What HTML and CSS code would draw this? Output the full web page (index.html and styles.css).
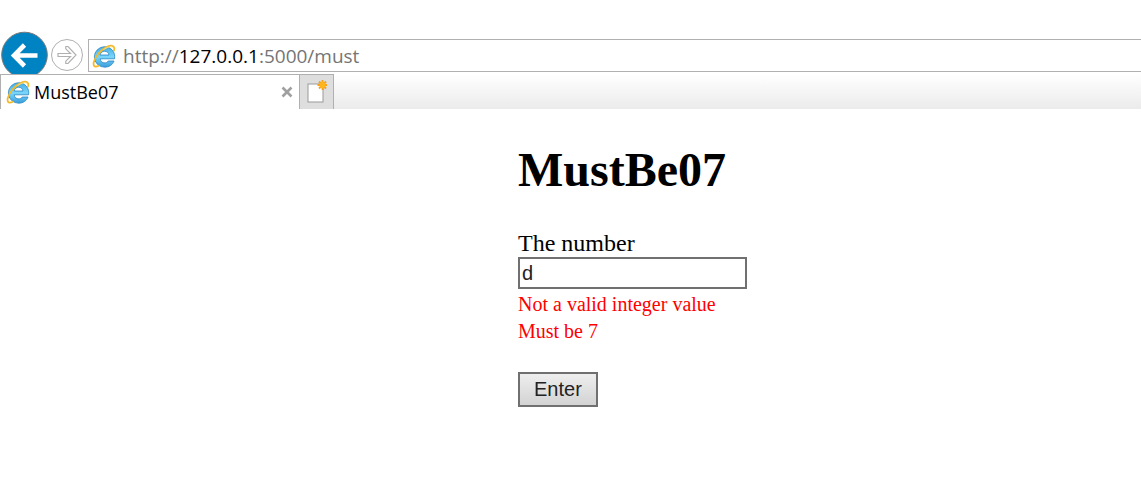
FILE: index.html
```html
<!DOCTYPE html>
<html lang="en">
<head>
<meta charset="utf-8">
<title>MustBe07</title>
<link rel="stylesheet" href="styles.css">
</head>
<body>
<svg class="defs" width="0" height="0" aria-hidden="true">
  <defs>
    <linearGradient id="blue" gradientUnits="userSpaceOnUse" x1="0" y1="3" x2="0" y2="23">
      <stop offset="0" stop-color="#45aee4"/>
      <stop offset=".5" stop-color="#7ad6fa"/>
      <stop offset="1" stop-color="#3a9fda"/>
    </linearGradient>
    <symbol id="ie" viewBox="0 0 24 24">
      <path d="M12.500 2.700A10 10 0 0 1 22.500 14.800H8.200C8.600 19.500 14.800 20 16.200 17H22C20.700 20.800 17 23.200 12.700 23.200A10.200 10.200 0 1 1 12.500 2.700zM8.200 11H17C16.600 6 8.700 6 8.200 11z" fill="url(#blue)" stroke="#2787c4" stroke-width=".8"/>
      <path d="M22 6.500C23.300 2.500 20.300.4 15.500 2.600 9 5.500 3.200 12.300 1.800 18c-1 4.600 1.400 5.600 5 3.800" fill="none" stroke="#f3b92a" stroke-width="1.800" stroke-linecap="round"/>
      <path d="M21.500 4C20 1.800 15.500 3 11.500 5.500" fill="none" stroke="#ffe48a" stroke-width=".8"/>
    </symbol>
  </defs>
</svg>
<header class="browser">
  <nav class="toolbar" aria-label="Navigation">
    <button class="nav-button back" type="button" aria-label="Back">
      <svg width="49" height="48" viewBox="0 0 49 48"><circle cx="24.500" cy="24" r="22.800" fill="#0083c3" stroke="#777" stroke-width="1"/><path d="M37.500 24.500H14.500M24.500 14L14 24.500 24.500 35" fill="none" stroke="#fff" stroke-width="4.600"/></svg>
    </button>
    <button class="nav-button forward" type="button" aria-label="Forward">
      <svg width="34" height="34" viewBox="0 0 34 34"><circle cx="17" cy="17" r="15.500" fill="#fff" stroke="#b0b0b0"/><path d="M8 15.500h12.500l-4.700-4.700V8.500h2.200l8 8.500-8 8.500h-2.200v-2.300l4.700-4.700H8z" fill="#fff" stroke="#b0b0b0" stroke-width="1.200"/></svg>
    </button>
    <div class="address">
      <svg class="ie" width="24" height="24"><use href="#ie"/></svg>
      <div class="url" role="textbox" aria-label="Address" contenteditable="true" spellcheck="false">http://<span class="host">127.0.0.1</span>:5000/must</div>
    </div>
  </nav>
  <div class="tabs">
    <div class="tab">
      <svg class="ie" width="24" height="24"><use href="#ie"/></svg>
      <span class="tab-title">MustBe07</span>
      <button class="close" type="button" aria-label="Close tab"><svg width="12" height="12" viewBox="0 0 12 12"><path d="M1.500 1.500l9 9M10.500 1.500l-9 9" stroke="#a0a0a0" stroke-width="2.600"/></svg></button>
    </div>
    <button class="new-tab" type="button" aria-label="New tab">
      <svg width="22" height="24" viewBox="0 0 22 24"><rect x="3" y="4" width="15" height="18" fill="#fff" stroke="#999"/><path d="M17.500 0v10M12.500 5h10M14 1.500l7 7M21 1.500l-7 7" stroke="#f6a01a" stroke-width="1.800"/><circle cx="17.500" cy="5" r="3" fill="#ffb51e"/></svg>
    </button>
  </div>
</header>
<main class="page">
  <h1 class="title">MustBe07</h1>
  <form class="form">
    <label class="label" for="number">The number</label>
    <input class="number" id="number" type="text" value="d" aria-describedby="errors">
    <div class="errors" id="errors">
      <div>Not a valid integer value</div>
      <div>Must be 7</div>
    </div>
    <button class="submit" type="button">Enter</button>
  </form>
</main>
</body>
</html>
```
FILE: styles.css
```css
* { box-sizing: border-box; }
body { margin: 0; background: #fff; color: #000; font-family: "Liberation Serif", "Times New Roman", serif; }
svg { display: block; flex: none; }
button { padding: 0; border: 0; background: none; }
.defs { position: absolute; }

.browser { padding-top: 31px; font-family: "Open Sans", "Noto Sans", sans-serif; font-size: 18px; line-height: 24px; }
.toolbar { display: flex; align-items: flex-start; height: 43px; overflow: hidden; }
.nav-button { flex: none; }
.forward { margin: 7px 4px 0 1px; }
.address { flex: 1; display: flex; align-items: center; gap: 7px; height: 33px; margin-top: 8px; padding-left: 3px; border: 1px solid #b0b0b0; border-right: 0; }
.url { flex: 1; color: #757575; font-size: 19px; white-space: nowrap; outline: 0; }
.host { color: #000; }

.tabs { display: flex; height: 35px; background: linear-gradient(#fff, #ebebeb); }
.tab { display: flex; align-items: center; gap: 4px; width: 300px; padding: 0 6px 0 5px; background: #fff; border: 1px solid #b0b0b0; border-bottom: 0; }
.tab-title { flex: 1; }
.new-tab { width: 34px; padding-left: 5px; background: #dedede; border: 1px solid #b0b0b0; border-width: 1px 1px 0 0; }

.page { padding: 32px 16px 32px 518px; }
.title { margin: 0; font-size: 48px; line-height: 57px; }
.form { display: flex; flex-direction: column; align-items: flex-start; margin-top: 32px; }
.label { font-size: 24px; line-height: 27px; }
.number { width: 229px; height: 32px; padding: 0 2px; border: 2px solid #707070; color: #222; font: 20px "Liberation Sans", Arial, sans-serif; }
.errors { margin-top: 2px; color: #f00; font-size: 20px; line-height: 27px; }
.submit { height: 35px; margin-top: 27px; padding: 0 14px; border: 2px solid #707070; background: linear-gradient(#eee, #d3d3d3); color: #222; font: 20px "Liberation Sans", Arial, sans-serif; }
```
